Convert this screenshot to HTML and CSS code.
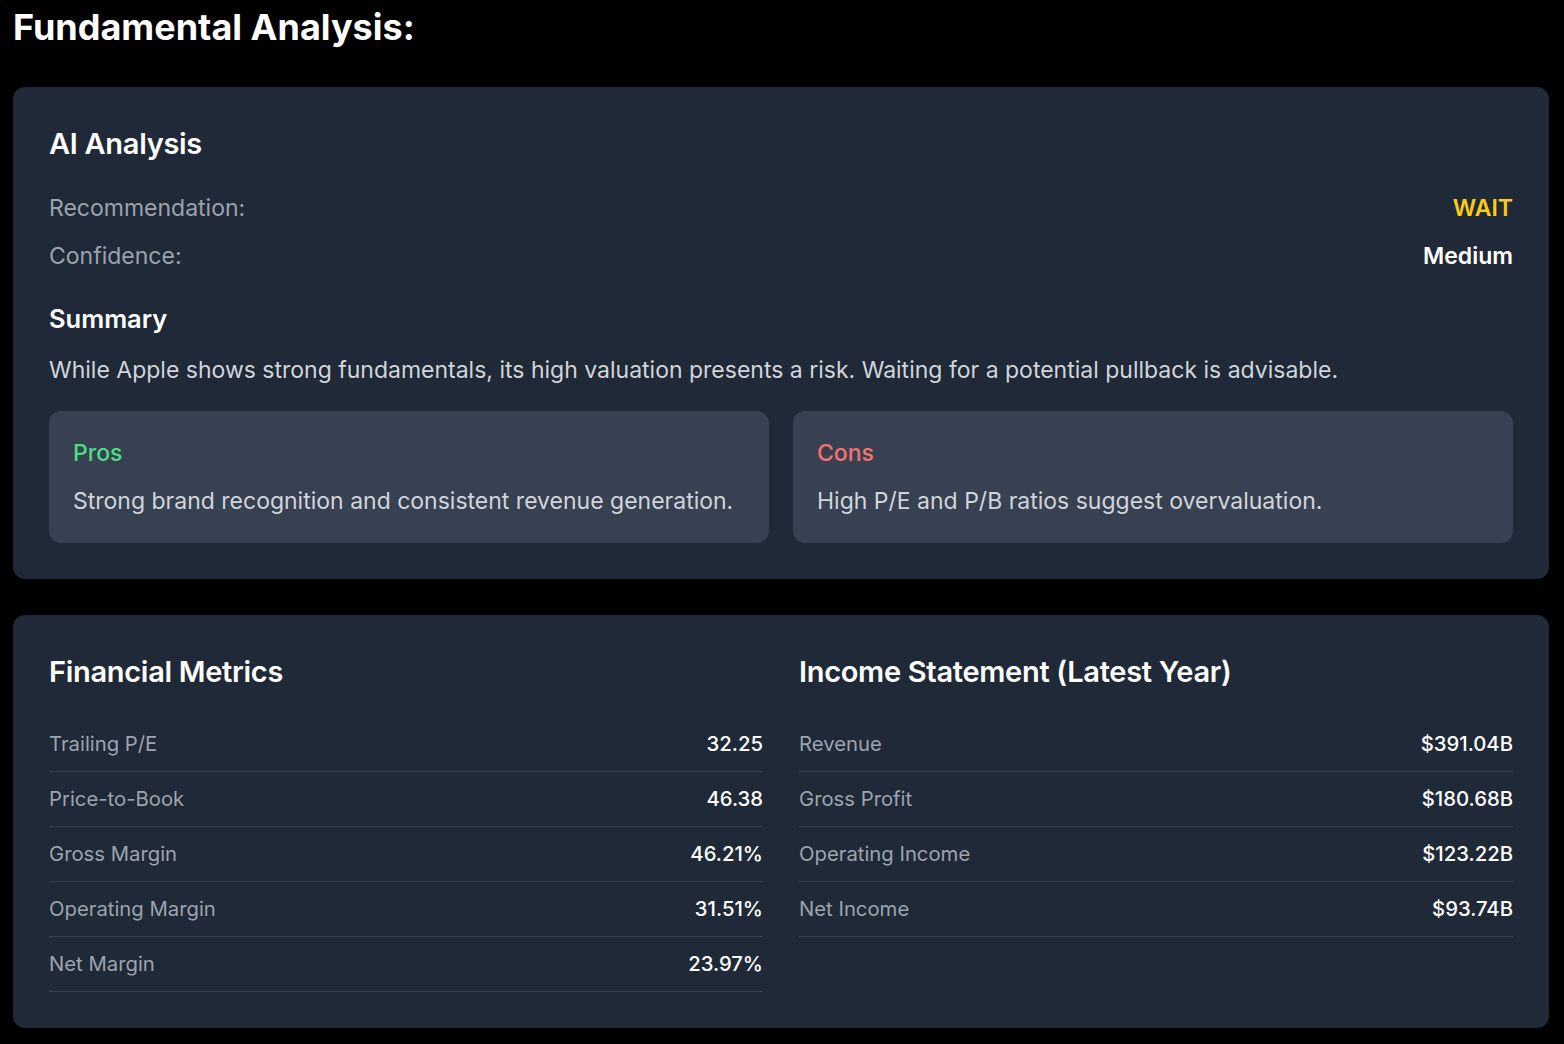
FILE: index.html
```html
<!DOCTYPE html>
<html lang="en">
<head>
<meta charset="utf-8">
<title>Fundamental Analysis</title>
<link rel="stylesheet" href="styles.css">
</head>
<body>
<main class="page">
  <h1 class="page-title">Fundamental Analysis:</h1>

  <section class="card">
    <h2 class="card-title">AI Analysis</h2>
    <div class="kv-list">
      <div class="kv"><span class="kv-label">Recommendation:</span><span class="kv-value wait">WAIT</span></div>
      <div class="kv"><span class="kv-label">Confidence:</span><span class="kv-value">Medium</span></div>
    </div>
    <h3 class="summary-title">Summary</h3>
    <p class="summary-text">While Apple shows strong fundamentals, its high valuation presents a risk. Waiting for a potential pullback is advisable.</p>
    <div class="pc-grid">
      <div class="pc-box">
        <h4 class="pc-title pros">Pros</h4>
        <p class="pc-text">Strong brand recognition and consistent revenue generation.</p>
      </div>
      <div class="pc-box">
        <h4 class="pc-title cons">Cons</h4>
        <p class="pc-text">High P/E and P/B ratios suggest overvaluation.</p>
      </div>
    </div>
  </section>

  <section class="card metrics">
    <div class="metrics-col">
      <h2 class="card-title">Financial Metrics</h2>
      <div class="rows">
        <div class="row"><span class="row-label">Trailing P/E</span><span class="row-value">32.25</span></div>
        <div class="row"><span class="row-label">Price-to-Book</span><span class="row-value">46.38</span></div>
        <div class="row"><span class="row-label">Gross Margin</span><span class="row-value">46.21%</span></div>
        <div class="row"><span class="row-label">Operating Margin</span><span class="row-value">31.51%</span></div>
        <div class="row"><span class="row-label">Net Margin</span><span class="row-value">23.97%</span></div>
      </div>
    </div>
    <div class="metrics-col">
      <h2 class="card-title">Income Statement (Latest Year)</h2>
      <div class="rows">
        <div class="row"><span class="row-label">Revenue</span><span class="row-value">$391.04B</span></div>
        <div class="row"><span class="row-label">Gross Profit</span><span class="row-value">$180.68B</span></div>
        <div class="row"><span class="row-label">Operating Income</span><span class="row-value">$123.22B</span></div>
        <div class="row"><span class="row-label">Net Income</span><span class="row-value">$93.74B</span></div>
      </div>
    </div>
  </section>
</main>
</body>
</html>
```

FILE: styles.css
```css
* { box-sizing: border-box; }

html, body {
  margin: 0;
  padding: 0;
  background: #000;
}

body {
  font-family: Inter, "Noto Sans", "Liberation Sans", sans-serif;
  color: #fff;
}

.page {
  padding: 3px 15px 17px 13px;
}

.page-title {
  margin: 0 0 36px 0;
  font-size: 36px;
  line-height: 48px;
  font-weight: 700;
  color: #fff;
  letter-spacing: 0;
}

.card {
  background: #1f2937;
  border-radius: 12px;
  padding: 36px;
  margin-bottom: 36px;
}

.card-title {
  margin: 0;
  font-size: 29px;
  line-height: 42px;
  font-weight: 600;
  color: #fff;
  letter-spacing: -0.3px;
}

.kv-list {
  margin-top: 25px;
  display: flex;
  flex-direction: column;
  gap: 12px;
}

.kv {
  display: flex;
  justify-content: space-between;
  font-size: 23px;
  line-height: 36px;
}

.kv-label { color: #9ca3af; }
.kv-value { font-weight: 600; color: #fff; }
.kv-value.wait { color: #facc15; }

.summary-title {
  margin: 24px 0 12px 0;
  font-size: 25.5px;
  line-height: 42px;
  font-weight: 600;
  color: #fff;
}

.summary-text {
  margin: 0;
  font-size: 23px;
  line-height: 36px;
  color: #d1d5db;
}

.pc-grid {
  margin-top: 23px;
  display: grid;
  grid-template-columns: 1fr 1fr;
  gap: 24px;
}

.pc-box {
  background: #374151;
  border-radius: 12px;
  padding: 24px;
}

.pc-title {
  margin: 0 0 12px 0;
  font-size: 23px;
  line-height: 36px;
  font-weight: 500;
}
.pc-title.pros { color: #4ade80; }
.pc-title.cons { color: #f87171; }

.pc-text {
  margin: 0;
  font-size: 23px;
  line-height: 36px;
  color: #d1d5db;
}

.metrics {
  display: grid;
  grid-template-columns: 1fr 1fr;
  column-gap: 36px;
  align-items: start;
}

.rows {
  margin-top: 24px;
}

.row {
  display: flex;
  justify-content: space-between;
  padding: 12px 0;
  border-bottom: 1px solid #374151;
  font-size: 20.3px;
  line-height: 30px;
}

.row-label { color: #9ca3af; }
.row-value { color: #fff; font-weight: 500; }
```
